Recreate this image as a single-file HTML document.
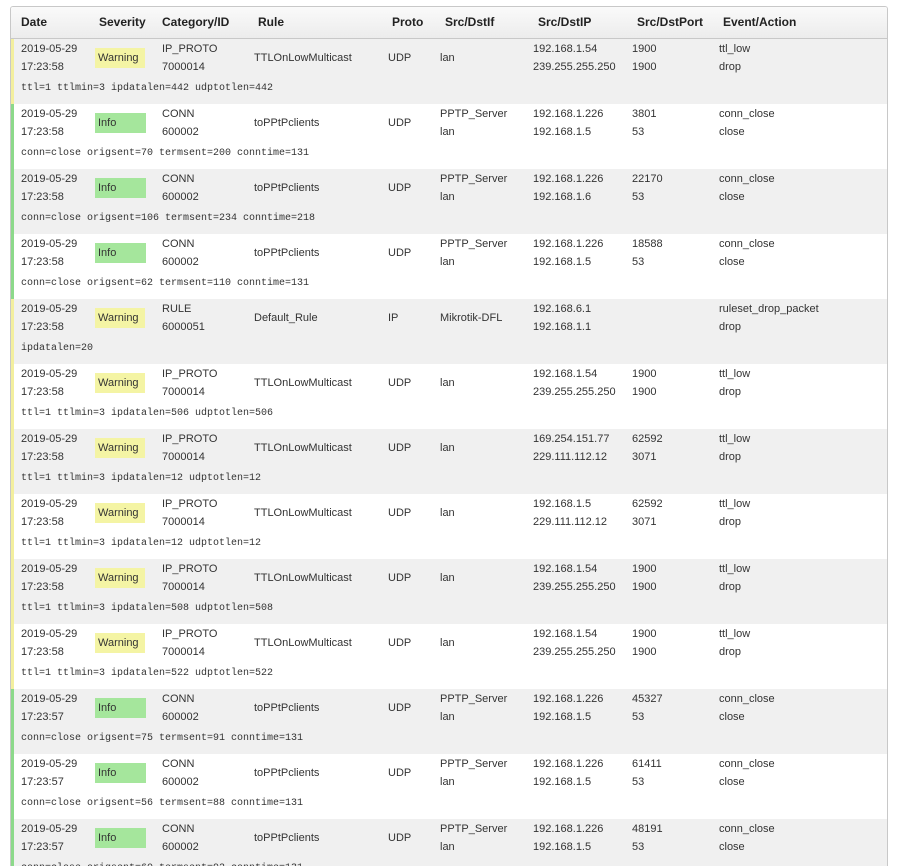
<!DOCTYPE html>
<html style="overflow:hidden;height:866px"><head><meta charset="utf-8"><style>
body{margin:0;background:#fff;width:905px;height:866px;overflow:hidden;font-family:"Liberation Sans",Arial,sans-serif;font-size:11px;color:#333;position:relative}
.box{position:absolute;left:10px;top:6px;width:876px;height:870px;border:1px solid #c8c8c8;border-bottom:none;border-radius:3px 3px 0 0;overflow:hidden}
.hd{position:absolute;left:0;top:0;width:876px;height:31px;background:linear-gradient(#fafafa,#ececec);border-bottom:1px solid #c8c8c8;font-weight:bold;font-size:12px;color:#222}
.hd span{position:absolute;top:8px}
.r{position:absolute;left:0;width:876px;height:65px}
.r span{position:absolute;line-height:14px;white-space:nowrap}
.g{background:#f0f0f0}.w{background:#fff}
.r:before{content:"";position:absolute;left:0;top:0;width:3px;height:65px}
.Y:before{background:#f3ef9e}.G:before{background:#8cd98a}
.b{left:84px;top:9px;width:51px;height:20px;line-height:20px!important;padding-left:3px;box-sizing:border-box}
.Y .b{background:#f4f4a4;width:50px}.G .b{background:#a5e69c;padding-left:3px}
.m{font-family:"Liberation Mono","DejaVu Sans Mono",monospace;font-size:10px;left:10px;top:43px}
</style></head><body><div class="box">
<div class="hd"><span style="left:10px">Date</span><span style="left:88px">Severity</span><span style="left:151px">Category/ID</span><span style="left:247px">Rule</span><span style="left:381px">Proto</span><span style="left:434px">Src/DstIf</span><span style="left:527px">Src/DstIP</span><span style="left:626px">Src/DstPort</span><span style="left:712px">Event/Action</span></div>

<div class="r g Y" style="top:32px"><span style="left:10px;top:3px">2019-05-29</span><span style="left:10px;top:21px">17:23:58</span><span class="b">Warning</span><span style="left:151px;top:3px">IP_PROTO</span><span style="left:151px;top:21px">7000014</span><span style="left:243px;top:12px">TTLOnLowMulticast</span><span style="left:377px;top:12px">UDP</span><span style="left:429px;top:12px">lan</span><span style="left:522px;top:3px">192.168.1.54</span><span style="left:522px;top:21px">239.255.255.250</span><span style="left:621px;top:3px">1900</span><span style="left:621px;top:21px">1900</span><span style="left:708px;top:3px">ttl_low</span><span style="left:708px;top:21px">drop</span><span class="m">ttl=1 ttlmin=3 ipdatalen=442 udptotlen=442</span></div>

<div class="r w G" style="top:97px"><span style="left:10px;top:3px">2019-05-29</span><span style="left:10px;top:21px">17:23:58</span><span class="b">Info</span><span style="left:151px;top:3px">CONN</span><span style="left:151px;top:21px">600002</span><span style="left:243px;top:12px">toPPtPclients</span><span style="left:377px;top:12px">UDP</span><span style="left:429px;top:3px">PPTP_Server</span><span style="left:429px;top:21px">lan</span><span style="left:522px;top:3px">192.168.1.226</span><span style="left:522px;top:21px">192.168.1.5</span><span style="left:621px;top:3px">3801</span><span style="left:621px;top:21px">53</span><span style="left:708px;top:3px">conn_close</span><span style="left:708px;top:21px">close</span><span class="m">conn=close origsent=70 termsent=200 conntime=131</span></div>

<div class="r g G" style="top:162px"><span style="left:10px;top:3px">2019-05-29</span><span style="left:10px;top:21px">17:23:58</span><span class="b">Info</span><span style="left:151px;top:3px">CONN</span><span style="left:151px;top:21px">600002</span><span style="left:243px;top:12px">toPPtPclients</span><span style="left:377px;top:12px">UDP</span><span style="left:429px;top:3px">PPTP_Server</span><span style="left:429px;top:21px">lan</span><span style="left:522px;top:3px">192.168.1.226</span><span style="left:522px;top:21px">192.168.1.6</span><span style="left:621px;top:3px">22170</span><span style="left:621px;top:21px">53</span><span style="left:708px;top:3px">conn_close</span><span style="left:708px;top:21px">close</span><span class="m">conn=close origsent=106 termsent=234 conntime=218</span></div>

<div class="r w G" style="top:227px"><span style="left:10px;top:3px">2019-05-29</span><span style="left:10px;top:21px">17:23:58</span><span class="b">Info</span><span style="left:151px;top:3px">CONN</span><span style="left:151px;top:21px">600002</span><span style="left:243px;top:12px">toPPtPclients</span><span style="left:377px;top:12px">UDP</span><span style="left:429px;top:3px">PPTP_Server</span><span style="left:429px;top:21px">lan</span><span style="left:522px;top:3px">192.168.1.226</span><span style="left:522px;top:21px">192.168.1.5</span><span style="left:621px;top:3px">18588</span><span style="left:621px;top:21px">53</span><span style="left:708px;top:3px">conn_close</span><span style="left:708px;top:21px">close</span><span class="m">conn=close origsent=62 termsent=110 conntime=131</span></div>

<div class="r g Y" style="top:292px"><span style="left:10px;top:3px">2019-05-29</span><span style="left:10px;top:21px">17:23:58</span><span class="b">Warning</span><span style="left:151px;top:3px">RULE</span><span style="left:151px;top:21px">6000051</span><span style="left:243px;top:12px">Default_Rule</span><span style="left:377px;top:12px">IP</span><span style="left:429px;top:12px">Mikrotik-DFL</span><span style="left:522px;top:3px">192.168.6.1</span><span style="left:522px;top:21px">192.168.1.1</span><span style="left:708px;top:3px">ruleset_drop_packet</span><span style="left:708px;top:21px">drop</span><span class="m">ipdatalen=20</span></div>

<div class="r w Y" style="top:357px"><span style="left:10px;top:3px">2019-05-29</span><span style="left:10px;top:21px">17:23:58</span><span class="b">Warning</span><span style="left:151px;top:3px">IP_PROTO</span><span style="left:151px;top:21px">7000014</span><span style="left:243px;top:12px">TTLOnLowMulticast</span><span style="left:377px;top:12px">UDP</span><span style="left:429px;top:12px">lan</span><span style="left:522px;top:3px">192.168.1.54</span><span style="left:522px;top:21px">239.255.255.250</span><span style="left:621px;top:3px">1900</span><span style="left:621px;top:21px">1900</span><span style="left:708px;top:3px">ttl_low</span><span style="left:708px;top:21px">drop</span><span class="m">ttl=1 ttlmin=3 ipdatalen=506 udptotlen=506</span></div>

<div class="r g Y" style="top:422px"><span style="left:10px;top:3px">2019-05-29</span><span style="left:10px;top:21px">17:23:58</span><span class="b">Warning</span><span style="left:151px;top:3px">IP_PROTO</span><span style="left:151px;top:21px">7000014</span><span style="left:243px;top:12px">TTLOnLowMulticast</span><span style="left:377px;top:12px">UDP</span><span style="left:429px;top:12px">lan</span><span style="left:522px;top:3px">169.254.151.77</span><span style="left:522px;top:21px">229.111.112.12</span><span style="left:621px;top:3px">62592</span><span style="left:621px;top:21px">3071</span><span style="left:708px;top:3px">ttl_low</span><span style="left:708px;top:21px">drop</span><span class="m">ttl=1 ttlmin=3 ipdatalen=12 udptotlen=12</span></div>

<div class="r w Y" style="top:487px"><span style="left:10px;top:3px">2019-05-29</span><span style="left:10px;top:21px">17:23:58</span><span class="b">Warning</span><span style="left:151px;top:3px">IP_PROTO</span><span style="left:151px;top:21px">7000014</span><span style="left:243px;top:12px">TTLOnLowMulticast</span><span style="left:377px;top:12px">UDP</span><span style="left:429px;top:12px">lan</span><span style="left:522px;top:3px">192.168.1.5</span><span style="left:522px;top:21px">229.111.112.12</span><span style="left:621px;top:3px">62592</span><span style="left:621px;top:21px">3071</span><span style="left:708px;top:3px">ttl_low</span><span style="left:708px;top:21px">drop</span><span class="m">ttl=1 ttlmin=3 ipdatalen=12 udptotlen=12</span></div>

<div class="r g Y" style="top:552px"><span style="left:10px;top:3px">2019-05-29</span><span style="left:10px;top:21px">17:23:58</span><span class="b">Warning</span><span style="left:151px;top:3px">IP_PROTO</span><span style="left:151px;top:21px">7000014</span><span style="left:243px;top:12px">TTLOnLowMulticast</span><span style="left:377px;top:12px">UDP</span><span style="left:429px;top:12px">lan</span><span style="left:522px;top:3px">192.168.1.54</span><span style="left:522px;top:21px">239.255.255.250</span><span style="left:621px;top:3px">1900</span><span style="left:621px;top:21px">1900</span><span style="left:708px;top:3px">ttl_low</span><span style="left:708px;top:21px">drop</span><span class="m">ttl=1 ttlmin=3 ipdatalen=508 udptotlen=508</span></div>

<div class="r w Y" style="top:617px"><span style="left:10px;top:3px">2019-05-29</span><span style="left:10px;top:21px">17:23:58</span><span class="b">Warning</span><span style="left:151px;top:3px">IP_PROTO</span><span style="left:151px;top:21px">7000014</span><span style="left:243px;top:12px">TTLOnLowMulticast</span><span style="left:377px;top:12px">UDP</span><span style="left:429px;top:12px">lan</span><span style="left:522px;top:3px">192.168.1.54</span><span style="left:522px;top:21px">239.255.255.250</span><span style="left:621px;top:3px">1900</span><span style="left:621px;top:21px">1900</span><span style="left:708px;top:3px">ttl_low</span><span style="left:708px;top:21px">drop</span><span class="m">ttl=1 ttlmin=3 ipdatalen=522 udptotlen=522</span></div>

<div class="r g G" style="top:682px"><span style="left:10px;top:3px">2019-05-29</span><span style="left:10px;top:21px">17:23:57</span><span class="b">Info</span><span style="left:151px;top:3px">CONN</span><span style="left:151px;top:21px">600002</span><span style="left:243px;top:12px">toPPtPclients</span><span style="left:377px;top:12px">UDP</span><span style="left:429px;top:3px">PPTP_Server</span><span style="left:429px;top:21px">lan</span><span style="left:522px;top:3px">192.168.1.226</span><span style="left:522px;top:21px">192.168.1.5</span><span style="left:621px;top:3px">45327</span><span style="left:621px;top:21px">53</span><span style="left:708px;top:3px">conn_close</span><span style="left:708px;top:21px">close</span><span class="m">conn=close origsent=75 termsent=91 conntime=131</span></div>

<div class="r w G" style="top:747px"><span style="left:10px;top:3px">2019-05-29</span><span style="left:10px;top:21px">17:23:57</span><span class="b">Info</span><span style="left:151px;top:3px">CONN</span><span style="left:151px;top:21px">600002</span><span style="left:243px;top:12px">toPPtPclients</span><span style="left:377px;top:12px">UDP</span><span style="left:429px;top:3px">PPTP_Server</span><span style="left:429px;top:21px">lan</span><span style="left:522px;top:3px">192.168.1.226</span><span style="left:522px;top:21px">192.168.1.5</span><span style="left:621px;top:3px">61411</span><span style="left:621px;top:21px">53</span><span style="left:708px;top:3px">conn_close</span><span style="left:708px;top:21px">close</span><span class="m">conn=close origsent=56 termsent=88 conntime=131</span></div>

<div class="r g G" style="top:812px"><span style="left:10px;top:3px">2019-05-29</span><span style="left:10px;top:21px">17:23:57</span><span class="b">Info</span><span style="left:151px;top:3px">CONN</span><span style="left:151px;top:21px">600002</span><span style="left:243px;top:12px">toPPtPclients</span><span style="left:377px;top:12px">UDP</span><span style="left:429px;top:3px">PPTP_Server</span><span style="left:429px;top:21px">lan</span><span style="left:522px;top:3px">192.168.1.226</span><span style="left:522px;top:21px">192.168.1.5</span><span style="left:621px;top:3px">48191</span><span style="left:621px;top:21px">53</span><span style="left:708px;top:3px">conn_close</span><span style="left:708px;top:21px">close</span><span class="m">conn=close origsent=60 termsent=92 conntime=131</span></div>
</div></body></html>
